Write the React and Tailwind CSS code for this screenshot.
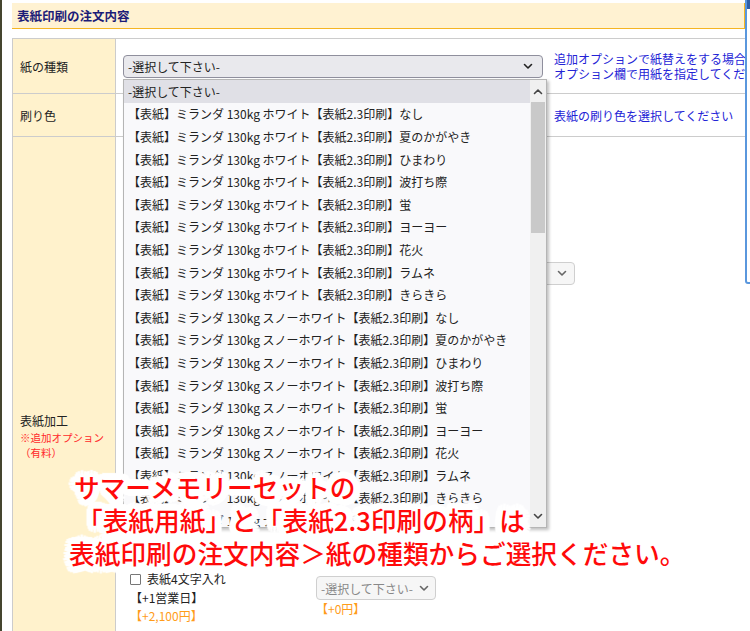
import React from "react";

const patterns = ["なし", "夏のかがやき", "ひまわり", "波打ち際", "蛍", "ヨーヨー", "花火", "ラムネ", "きらきら"];
const options = [
  "-選択して下さい-",
  ...patterns.map((p) => `【表紙】ミランダ 130kg ホワイト【表紙2.3印刷】${p}`),
  ...patterns.map((p) => `【表紙】ミランダ 130kg スノーホワイト【表紙2.3印刷】${p}`),
  ...patterns.slice(0, 3).map((p) => `【表紙】ミランダ 130kg ナチュラル【表紙2.3印刷】${p}`),
];

function Chevron({ up = false, className = "" }) {
  return (
    <svg width="10" height="7" viewBox="0 0 10 7" className={className}>
      <path
        d={up ? "M1.5 5.5 L5 2 L8.5 5.5" : "M1.5 1.5 L5 5 L8.5 1.5"}
        fill="none"
        stroke="currentColor"
        strokeWidth="1.6"
        strokeLinecap="round"
        strokeLinejoin="round"
      />
    </svg>
  );
}

function NativeSelect({ className = "" }) {
  return (
    <div
      className={`flex h-[23px] w-[420px] items-center justify-between rounded-[4px] border border-[#8f8f9d] bg-[#e9e9ed] pl-[4px] pr-[9px] text-[#222] ${className}`}
    >
      <span>-選択して下さい-</span>
      <Chevron className="text-[#222]" />
    </div>
  );
}

const halo =
  "[text-shadow:7px_0_1px_#fff,-7px_0_1px_#fff,0_7px_1px_#fff,0_-7px_1px_#fff,5px_5px_1px_#fff,-5px_5px_1px_#fff,5px_-5px_1px_#fff,-5px_-5px_1px_#fff,6px_3px_1px_#fff,-6px_3px_1px_#fff,6px_-3px_1px_#fff,-6px_-3px_1px_#fff,3px_6px_1px_#fff,-3px_6px_1px_#fff,3px_-6px_1px_#fff,-3px_-6px_1px_#fff,4px_0_0_#fff,-4px_0_0_#fff,0_4px_0_#fff,0_-4px_0_#fff,3px_3px_0_#fff,-3px_3px_0_#fff,3px_-3px_0_#fff,-3px_-3px_0_#fff]";

export default function App() {
  return (
    <div className="relative h-[631px] w-[750px] overflow-hidden bg-white font-['Noto_Sans_CJK_JP','Noto_Sans',sans-serif] text-[12px] leading-[15px] text-[#333]">
      <div className="flex h-full">
        <div className="h-full w-[2px] bg-[#45452f]" />
        <div className="ml-[10px] flex w-[733px] flex-col pt-[3px]">
          {/* header */}
          <div className="flex h-[26px] shrink-0 items-center border-b border-r border-[#f5b523] bg-[#fff2d2] pl-[5px] text-[12.5px] font-bold text-[#1c1c78]">
            表紙印刷の注文内容
          </div>

          {/* table */}
          <div className="mt-[9px] flex flex-1 flex-col border-l border-t border-[#cccccc]">
            {/* row 1 */}
            <div className="flex h-[55px] shrink-0 border-b border-[#cccccc]">
              <div className="flex w-[103px] shrink-0 items-center border-r border-[#cccccc] bg-[#fff2cc] pl-[7px] text-[#222]">
                紙の種類
              </div>
              <div className="flex items-center gap-[11px] pl-[7px]">
                <NativeSelect className="shrink-0" />
                <div className="whitespace-nowrap text-[#2323d6]">
                  <div>追加オプションで紙替えをする場合は</div>
                  <div>オプション欄で用紙を指定してください</div>
                </div>
              </div>
            </div>

            {/* row 2 */}
            <div className="flex h-[43px] shrink-0 border-b border-[#cccccc]">
              <div className="flex w-[103px] shrink-0 items-center border-r border-[#cccccc] bg-[#fff2cc] pl-[7px] text-[#222]">
                刷り色
              </div>
              <div className="flex items-center gap-[11px] pl-[7px]">
                <NativeSelect className="shrink-0" />
                <div className="whitespace-nowrap text-[#2323d6]">表紙の刷り色を選択してください</div>
              </div>
            </div>

            {/* row 3 */}
            <div className="flex flex-1">
              <div className="flex w-[103px] shrink-0 flex-col border-r border-[#cccccc] bg-[#fff2cc] pl-[7px] pt-[275px]">
                <div className="leading-[18px] text-[#222]">表紙加工</div>
                <div className="text-[10.5px] leading-[15px] text-[#ff2a2a]">※追加オプション</div>
                <div className="text-[10.5px] leading-[15px] text-[#ff2a2a]">（有料）</div>
              </div>
              <div className="flex flex-col pl-[7px]">
                <div className="mt-[125px] flex h-[23px] w-[452px] items-center justify-between rounded-[4px] border border-[#cfcfcf] bg-[#f6f6f6] pl-[4px] pr-[7px] text-[#777]">
                  <span>-選択して下さい-</span>
                  <Chevron className="text-[#666]" />
                </div>
                <div className="mt-[285px] flex">
                  <div className="ml-[7px] w-[186px] leading-[18.5px]">
                    <div className="flex items-center gap-[6px] text-[#222]">
                      <span className="inline-block h-[11px] w-[11px] rounded-[1px] border border-[#767676] bg-white" />
                      <span>表紙4文字入れ</span>
                    </div>
                    <div className="text-[#222]">【+1営業日】</div>
                    <div className="text-[#ff9c1a]">【+2,100円】</div>
                  </div>
                  <div className="mt-[6px] flex flex-col">
                    <div className="flex h-[24px] w-[120px] items-center justify-between rounded-[4px] border border-[#cfcfcf] bg-[#f6f6f6] pl-[4px] pr-[6px] text-[#888]">
                      <span>-選択して下さい-</span>
                      <Chevron className="text-[#666]" />
                    </div>
                    <div className="leading-[18px] text-[#ff9c1a]">【+0円】</div>
                  </div>
                </div>
              </div>
            </div>
          </div>
        </div>
      </div>

      {/* focused element on right edge */}
      <div className="absolute left-[745px] top-[-10px] h-[294px] w-[20px] rounded-bl-[3px] border-2 border-[#5a97dd] bg-white" />
      <div className="absolute left-[747px] top-0 h-[9px] w-[3px] bg-[#2f5fa8]" />

      {/* open dropdown list */}
      <div className="absolute left-[123px] top-[79px] flex h-[449px] w-[424px] overflow-hidden border border-[#b5b5b5] bg-[#f9f9fb] shadow-[2px_2px_3px_rgba(0,0,0,0.25)]">
        <div className="flex-1 overflow-hidden">
          {options.map((o, i) => (
            <div
              key={i}
              className={`flex h-[22.6px] items-center whitespace-nowrap pl-[4px] text-[#222] ${i === 0 ? "bg-[#e0e0e6]" : ""}`}
            >
              {o}
            </div>
          ))}
        </div>
        <div className="flex w-[16px] shrink-0 flex-col bg-[#f0f0f0]">
          <div className="flex h-[22px] items-center justify-center text-[#444]">
            <Chevron up />
          </div>
          <div className="mx-[1px] h-[131px] bg-[#c9c9c9]" />
          <div className="flex-1" />
          <div className="flex h-[22px] items-center justify-center text-[#444]">
            <Chevron />
          </div>
        </div>
      </div>

      {/* red annotation */}
      <div
        className={`absolute left-[69px] top-[470px] whitespace-nowrap text-[25.7px] font-medium leading-[33px] text-[#ff0a0a] ${halo}`}
      >
        <div className="ml-[5px]">サマーメモリーセットの</div>
        <div className="ml-[8px]">「表紙用紙」と「表紙2.3印刷の柄」は</div>
        <div>表紙印刷の注文内容＞紙の種類からご選択ください。</div>
      </div>
    </div>
  );
}
